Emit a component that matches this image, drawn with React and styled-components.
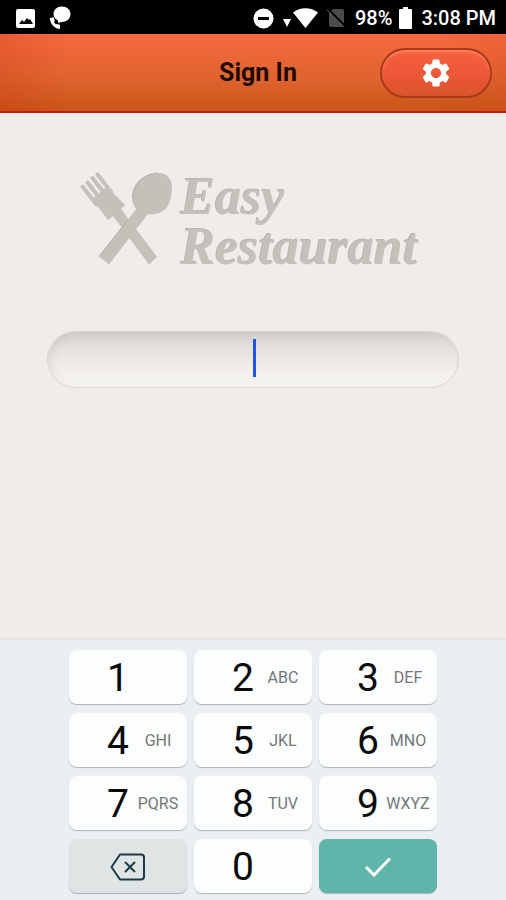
import React, { useState } from "react";
import styled, { createGlobalStyle } from "styled-components";
import { MdSettings } from "react-icons/md";

const GlobalStyle = createGlobalStyle`
  * {
    box-sizing: border-box;
  }
  body {
    margin: 0;
    background: #f0ecea;
    font-family: Roboto, "Liberation Sans", sans-serif;
  }
`;

const keys = [
  { digit: "1", letters: "" },
  { digit: "2", letters: "ABC" },
  { digit: "3", letters: "DEF" },
  { digit: "4", letters: "GHI" },
  { digit: "5", letters: "JKL" },
  { digit: "6", letters: "MNO" },
  { digit: "7", letters: "PQRS" },
  { digit: "8", letters: "TUV" },
  { digit: "9", letters: "WXYZ" },
];

function StatusIcons() {
  return (
    <StatusGroup gap={14}>
      <svg width="19" height="19" viewBox="0 0 19 19">
        <rect width="19" height="19" rx="2" fill="#fff" />
        <path d="M3 15l3-4 2 2 3-4 2 2 1-1 3 5z" fill="#000" />
      </svg>
      <svg width="22" height="24" viewBox="0 0 22 24">
        <path d="M2.500 13C2.500 17 6 21 10.500 21.500" fill="none" stroke="#fff" strokeWidth="3" />
        <path d="M1 13l3-.5 1 3M7 19l3 .5v3" fill="none" stroke="#fff" strokeWidth="2" />
        <path
          d="M13 .5c5 0 8.500 3.500 8.500 7.500 0 5-4 8-9 8l-3 1-1-3C5.500 13 4.500 10.500 4.500 8 4.500 4 8 .5 13 .5z"
          fill="#fff"
        />
      </svg>
    </StatusGroup>
  );
}

function SignalIcons() {
  return (
    <StatusGroup gap={9}>
      <svg width="21" height="21" viewBox="0 0 21 21">
        <circle cx="10.500" cy="10.500" r="10" fill="#fff" />
        <rect x="5" y="9" width="11" height="3" fill="#000" />
      </svg>
      <svg width="35" height="20" viewBox="0 0 35 20">
        <path d="M0 11h8l-4 8z" fill="#fff" />
        <path d="M10 4.500C17-1.200 28-1.200 35 4.500L22.500 20z" fill="#fff" />
      </svg>
      <svg width="19" height="20" viewBox="0 0 19 20">
        <path d="M6 1h9q2 0 2 2v14q0 2-2 2H4q-2 0-2-2V5z" fill="#4c4c4c" />
        <path d="M2 2l17 17" stroke="#000" strokeWidth="2" />
        <path d="M0 2l17 17" stroke="#5a5a5a" strokeWidth="1" />
      </svg>
    </StatusGroup>
  );
}

function Cutlery() {
  return (
    <svg width="94" height="94" viewBox="0 0 94 94" fill="#c5c0b9">
      <path d="M58 36L20 84.500 30 92.500 69 42z" />
      <path d="M58 38C53 33 52 25 54 18 58 7 68 1 79 1c9 0 14 6 14 15 0 7-2 14-5 19-5 7-13 8-21 7z" />
      <path d="M13 27L28 15 46 33 42 37 78 85 70 92.500 34 44 29 48z" />
      <path
        d="M3.500 14.500l14 18M8.500 10.500l14 18M13.500 6l14 18M18.500 2.500l14 18"
        stroke="#c5c0b9"
        strokeWidth="4"
        strokeLinecap="round"
      />
      <path
        d="M20 84.500L48 49M54 26C53 14 64 2 79 1"
        fill="none"
        stroke="#b3ada6"
        strokeWidth="1"
      />
    </svg>
  );
}

function Delete() {
  return (
    <svg width="36" height="28" viewBox="0 0 36 28" fill="none" stroke="#1c3b47" strokeWidth="2">
      <path d="M10 1.500H31q3 0 3 3v19q0 3-3 3H10L1.500 14z" strokeLinejoin="round" />
      <path d="M15 9l10 10M25 9L15 19" />
    </svg>
  );
}

export default function App() {
  const [pin, setPin] = useState("");

  return (
    <Page>
      <GlobalStyle />
      <StatusBar>
        <StatusIcons />
        <StatusGroup gap={9}>
          <SignalIcons />
          <StatusGroup gap={7}>
            <span>98%</span>
            <svg width="13" height="22" viewBox="0 0 13 22">
              <path d="M4 0h5v2h3q1 0 1 1v18q0 1-1 1H1q-1 0-1-1V3q0-1 1-1h3z" fill="#fff" />
            </svg>
          </StatusGroup>
          <span>3:08 PM</span>
        </StatusGroup>
      </StatusBar>
      <Header>
        <Title>Sign In</Title>
        <SettingsButton type="button" aria-label="Settings">
          <MdSettings size={34} />
        </SettingsButton>
      </Header>
      <Main>
        <Logo>
          <Cutlery />
          <div>
            <LogoLine>Easy</LogoLine>
            <LogoLine>Restaurant</LogoLine>
          </div>
        </Logo>
        <PinField>
          <PinInput
            type="password"
            aria-label="PIN"
            value={pin}
            onChange={(e) => setPin(e.target.value)}
          />
          {pin === "" && <Caret />}
        </PinField>
      </Main>
      <Keyboard>
        <KeyGrid>
          {keys.map((key) => (
            <Key type="button" key={key.digit} onClick={() => setPin(pin + key.digit)}>
              <span>{key.digit}</span>
              <Letters>{key.letters}</Letters>
            </Key>
          ))}
          <ActionKey type="button" aria-label="Delete" color="#dfe4e5" onClick={() => setPin(pin.slice(0, -1))}>
            <Delete />
          </ActionKey>
          <Key type="button" onClick={() => setPin(pin + "0")}>
            <span>0</span>
          </Key>
          <ActionKey type="button" aria-label="Done" color="#5fb5aa">
            <svg width="26" height="20" viewBox="0 0 26 20" fill="none" stroke="#fff" strokeWidth="3">
              <path d="M1 10l8 8L25 1.500" />
            </svg>
          </ActionKey>
        </KeyGrid>
      </Keyboard>
    </Page>
  );
}

const Page = styled.div`
  display: flex;
  flex-direction: column;
  min-height: 100vh;
`;

const StatusBar = styled.div`
  display: flex;
  align-items: center;
  justify-content: space-between;
  height: 34px;
  padding: 2px 10px 0 16px;
  background: #000;
  color: #fff;
  font-size: 20px;
  font-weight: 500;
  line-height: 24px;
`;

const StatusGroup = styled.div.withConfig({
  shouldForwardProp: (prop) => prop !== "gap",
})`
  display: flex;
  align-items: center;
  gap: ${(props) => props.gap}px;

  svg {
    display: block;
  }
`;

const Header = styled.header`
  display: grid;
  grid-template-columns: 1fr auto 1fr;
  align-items: center;
  height: 79px;
  padding: 0 14px;
  border-bottom: 2px solid #b92412;
  background:
    linear-gradient(90deg, rgba(190, 40, 10, 0.2), transparent 14%, transparent 86%, rgba(190, 40, 10, 0.1)),
    linear-gradient(#f7693f, #e0642f 55%, #cb5518);
`;

const Title = styled.h1`
  grid-column: 2;
  margin: 0 0 0 10px;
  color: #1f0b04;
  font-size: 25px;
  font-weight: 700;
  line-height: 30px;
`;

const SettingsButton = styled.button`
  display: flex;
  align-items: center;
  justify-content: center;
  justify-self: end;
  width: 112px;
  height: 50px;
  padding: 0;
  border: 2px solid #a93a17;
  border-radius: 25px;
  background: linear-gradient(#f4623e, #f0583a 45%, #d9542a);
  box-shadow: inset 0 2px 2px rgba(255, 150, 120, 0.6);
  color: #fff;
  cursor: pointer;
`;

const Main = styled.main`
  flex: 1;
  padding: 59px 47px 0;
  background: #f0ecea;
`;

const Logo = styled.div`
  display: flex;
  align-items: flex-start;
  justify-content: center;
  gap: 8px;
  padding-right: 10px;
`;

const LogoLine = styled.div`
  color: #c5c0b9;
  font-family: "Liberation Serif", serif;
  font-size: 52px;
  font-style: italic;
  font-weight: 700;
  line-height: 50px;
  text-shadow: -1px -1px 0 #bbb6af;
`;

const PinField = styled.div`
  position: relative;
  margin-top: 59px;
`;

const PinInput = styled.input`
  display: block;
  width: 100%;
  height: 57px;
  padding: 0 28px;
  border: 1px solid #d8d4d1;
  border-radius: 29px;
  outline: none;
  background: linear-gradient(#d6d2cf, #e4e0dd 30%, #f0ede8 62%, #f8f6f3);
  box-shadow: inset 3px 2px 8px rgba(120, 110, 100, 0.1);
  caret-color: #1f55e0;
  font-size: 32px;
  text-align: center;
`;

const Caret = styled.span`
  position: absolute;
  top: 8px;
  left: 50%;
  width: 3px;
  height: 38px;
  background: #1f55e0;
  pointer-events: none;
`;

const Keyboard = styled.section`
  padding: 10px 16px 7px;
  background: #eceff1;
  box-shadow: 0 -2px 3px rgba(0, 0, 0, 0.06);
`;

const KeyGrid = styled.div`
  display: grid;
  grid-template-columns: repeat(3, 1fr);
  gap: 9px 7px;
  max-width: 368px;
  margin: 0 auto;
`;

const Key = styled.button`
  display: grid;
  grid-template-columns: 22px 1fr;
  align-items: center;
  height: 54px;
  padding: 2px 0 0 38px;
  border: 0;
  border-radius: 8px;
  background: #fcfdfd;
  box-shadow: 0 1px 1px #aeb2b4;
  color: #0a0a0a;
  font-family: inherit;
  font-size: 39px;
  line-height: 46px;
  text-align: left;
  cursor: pointer;
`;

const Letters = styled.span`
  color: #737779;
  font-size: 16px;
  line-height: 20px;
  text-align: center;
`;

const ActionKey = styled(Key)`
  display: flex;
  justify-content: center;
  padding: 2px 0 0;
  background: ${(props) => props.color};
`;
